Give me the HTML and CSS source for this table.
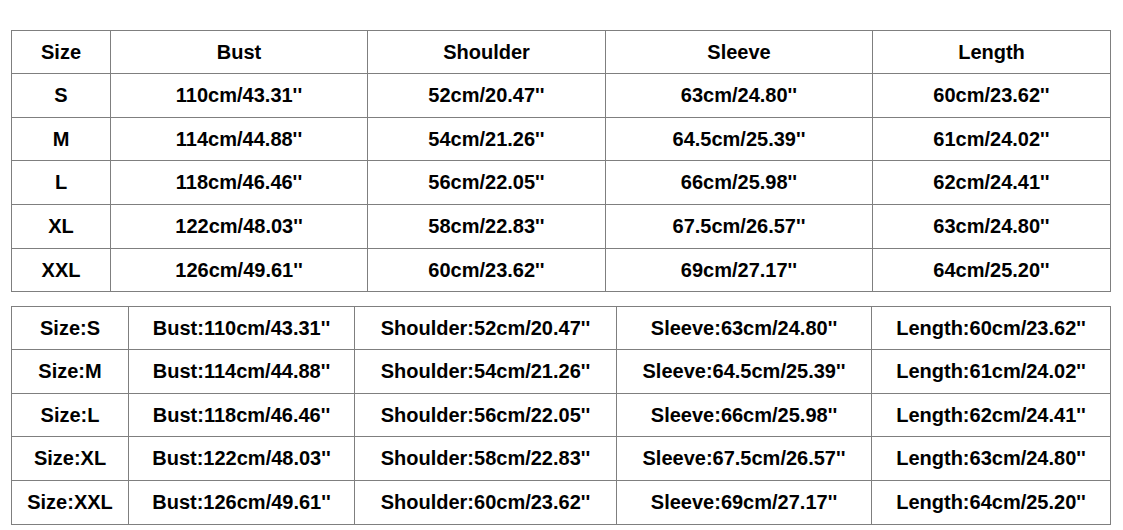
FILE: index.html
```html
<!DOCTYPE html>
<html>
<head>
<meta charset="utf-8">
<link rel="stylesheet" href="styles.css">
</head>
<body>
<div class="page">
  <div class="grid grid-a">
    <div class="cell">Size</div><div class="cell">Bust</div><div class="cell">Shoulder</div><div class="cell">Sleeve</div><div class="cell">Length</div>
    <div class="cell">S</div><div class="cell">110cm/43.31''</div><div class="cell">52cm/20.47''</div><div class="cell">63cm/24.80''</div><div class="cell">60cm/23.62''</div>
    <div class="cell">M</div><div class="cell">114cm/44.88''</div><div class="cell">54cm/21.26''</div><div class="cell">64.5cm/25.39''</div><div class="cell">61cm/24.02''</div>
    <div class="cell">L</div><div class="cell">118cm/46.46''</div><div class="cell">56cm/22.05''</div><div class="cell">66cm/25.98''</div><div class="cell">62cm/24.41''</div>
    <div class="cell">XL</div><div class="cell">122cm/48.03''</div><div class="cell">58cm/22.83''</div><div class="cell">67.5cm/26.57''</div><div class="cell">63cm/24.80''</div>
    <div class="cell">XXL</div><div class="cell">126cm/49.61''</div><div class="cell">60cm/23.62''</div><div class="cell">69cm/27.17''</div><div class="cell">64cm/25.20''</div>
  </div>
  <div class="grid grid-b">
    <div class="cell">Size:S</div><div class="cell">Bust:110cm/43.31''</div><div class="cell">Shoulder:52cm/20.47''</div><div class="cell">Sleeve:63cm/24.80''</div><div class="cell">Length:60cm/23.62''</div>
    <div class="cell">Size:M</div><div class="cell">Bust:114cm/44.88''</div><div class="cell">Shoulder:54cm/21.26''</div><div class="cell">Sleeve:64.5cm/25.39''</div><div class="cell">Length:61cm/24.02''</div>
    <div class="cell">Size:L</div><div class="cell">Bust:118cm/46.46''</div><div class="cell">Shoulder:56cm/22.05''</div><div class="cell">Sleeve:66cm/25.98''</div><div class="cell">Length:62cm/24.41''</div>
    <div class="cell">Size:XL</div><div class="cell">Bust:122cm/48.03''</div><div class="cell">Shoulder:58cm/22.83''</div><div class="cell">Sleeve:67.5cm/26.57''</div><div class="cell">Length:63cm/24.80''</div>
    <div class="cell">Size:XXL</div><div class="cell">Bust:126cm/49.61''</div><div class="cell">Shoulder:60cm/23.62''</div><div class="cell">Sleeve:69cm/27.17''</div><div class="cell">Length:64cm/25.20''</div>
  </div>
</div>
</body>
</html>
```

FILE: styles.css
```css
html, body {
  margin: 0;
  padding: 0;
  background: #ffffff;
}

.page {
  padding: 30px 0 0 11px;
  font-family: "Liberation Sans", Arial, sans-serif;
  font-weight: bold;
  font-size: 20px;
  color: #000000;
}

.grid {
  display: grid;
  width: 1100px;
  box-sizing: border-box;
  background: #7f7f7f;
  border: 1px solid #7f7f7f;
  gap: 1px;
}

.grid-a {
  grid-template-columns: 98px 256px 237px 266px 237px;
  grid-template-rows: 42px 43px 42px 43px 43px 42px;
}

.grid-b {
  margin-top: 14px;
  grid-template-columns: 116px 225px 261px 254px 238px;
  grid-template-rows: 42px 43px 42px 43px 43px;
}

.cell {
  background: #ffffff;
  display: flex;
  align-items: center;
  justify-content: center;
  white-space: nowrap;
}
```
